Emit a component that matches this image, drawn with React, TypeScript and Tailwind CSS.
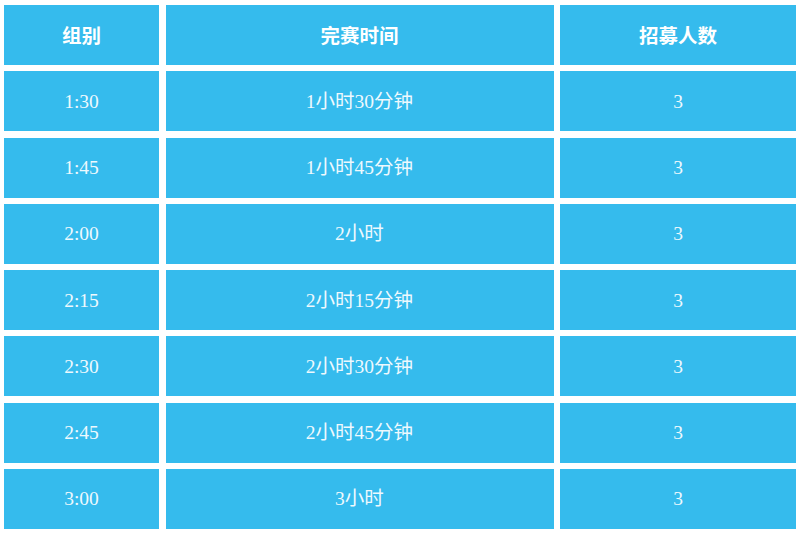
const rows = [
  { group: "1:30", time: "1小时30分钟", count: "3" },
  { group: "1:45", time: "1小时45分钟", count: "3" },
  { group: "2:00", time: "2小时", count: "3" },
  { group: "2:15", time: "2小时15分钟", count: "3" },
  { group: "2:30", time: "2小时30分钟", count: "3" },
  { group: "2:45", time: "2小时45分钟", count: "3" },
  { group: "3:00", time: "3小时", count: "3" },
];

const cell = "h-[60px] bg-[#35bbed] flex items-center justify-center";
const body = "text-[19.5px] text-[#eef9fe] font-['Liberation_Serif','Noto_Sans_CJK_SC',serif]";

export default function App() {
  return (
    <div className="w-[800px] h-[535px] bg-white pt-[5px] pl-[4px]">
      <div className="grid grid-cols-[155px_388px_236px] gap-x-[6.5px] gap-y-[6.3px]">
        {["组别", "完赛时间", "招募人数"].map((h) => (
          <div key={h} className={cell}>
            <span className="text-[19.5px] font-bold text-white font-['Noto_Sans_CJK_SC',sans-serif]">{h}</span>
          </div>
        ))}
        {rows.map((r) => (
          <>
            <div key={r.group + "a"} className={cell}>
              <span className={body}>{r.group}</span>
            </div>
            <div key={r.group + "b"} className={cell}>
              <span className={body}>{r.time}</span>
            </div>
            <div key={r.group + "c"} className={cell}>
              <span className={body}>{r.count}</span>
            </div>
          </>
        ))}
      </div>
    </div>
  );
}
